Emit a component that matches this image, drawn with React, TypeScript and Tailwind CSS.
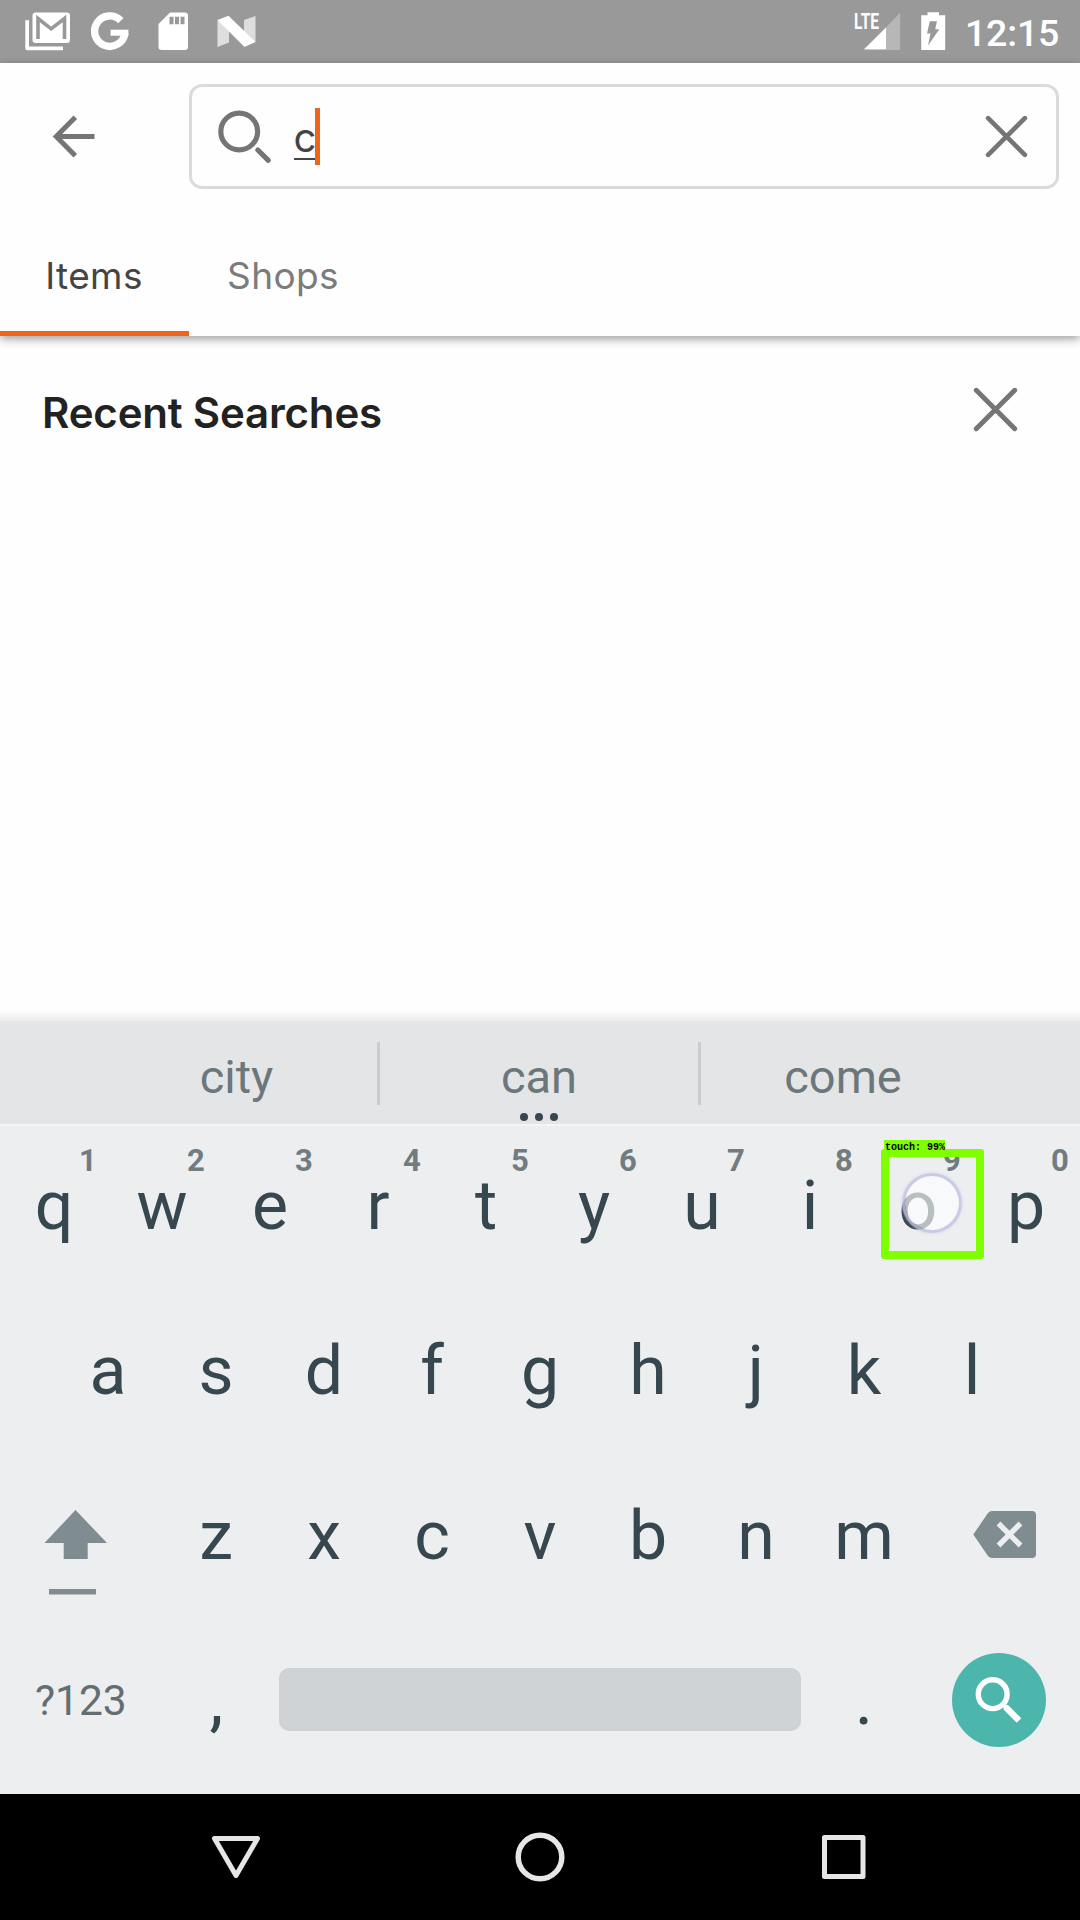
import type { ReactNode } from 'react';

const topRow = ['q', 'w', 'e', 'r', 't', 'y', 'u', 'i', 'o', 'p'];
const hints = ['1', '2', '3', '4', '5', '6', '7', '8', '9', '0'];
const homeRow = ['a', 's', 'd', 'f', 'g', 'h', 'j', 'k', 'l'];
const bottomRow = ['z', 'x', 'c', 'v', 'b', 'n', 'm'];

function Key({ label, hint, children }: { label: string; hint?: string; children?: ReactNode }) {
  return (
    <div className="relative flex h-[165px] w-[108px] items-center justify-center pb-px text-[68px] leading-none text-[#37474f]">
      {label}
      {hint && (
        <span className="absolute top-[20px] left-[68px] w-[40px] text-center text-[31px] leading-[34px] font-bold text-[#717c80]">
          {hint}
        </span>
      )}
      {children}
    </div>
  );
}

function CloseIcon({ size }: { size: number }) {
  return (
    <svg width={size} height={size} viewBox="0 0 44 44" fill="none" stroke="#757575" strokeWidth="4.8" strokeLinecap="round">
      <path d="M3.2 3.2 40.8 40.8M40.8 3.2 3.2 40.8" />
    </svg>
  );
}

function StatusBar() {
  return (
    <div className="flex h-[63px] justify-between bg-[#999999] text-white">
      <div className="flex pt-[12px] pl-[25px]">
        <svg className="mr-[20px]" width="46" height="39" viewBox="0 0 46 39" fill="none">
          <path d="M0.3 8.3H4V34.6H38V38.3H2.5Q.3 38.3 .3 36Z" fill="#fff" />
          <rect x="7.5" y=".4" width="37.5" height="30.6" rx="3.2" fill="#fff" />
          <path d="M13 27V6.5L26.2 16.8 39.5 6.5V27" stroke="#999" strokeWidth="3.6" />
        </svg>
        <svg className="mr-[29px]" width="38" height="39" viewBox="0 0 38 39" fill="none" stroke="#fff" strokeWidth="7.4">
          <path d="M29.8 8.6A15.2 15.2 0 1 0 33.9 21.2" />
          <path d="M19.600 20.700H37.400" strokeWidth="6" />
        </svg>
        <svg className="mr-[28px]" width="31" height="39" viewBox="0 0 31 39">
          <path d="M12 .6H26.7Q30 .6 30 3.8V34.8Q30 38 26.7 38H3.8Q.5 38 .5 34.8V12Z" fill="#fff" />
          <path d="M11.5 4.8h4v7.4h-4zM17 4.8h4v7.4h-4zM22.5 4.8h4v7.4h-4z" fill="#999" />
        </svg>
        <svg width="39" height="39" viewBox="0 0 39 39">
          <path d="M.5 8 12 14V30.500L.5 35ZM38.500 4 27 8V24L38.500 30Z" fill="#fff" fillOpacity=".68" />
          <path d="M.5 8 11.500 3.800 38.500 30 27.500 35Z" fill="#fff" />
        </svg>
      </div>
      <div className="flex pt-[4px] pr-[22px]">
        <svg className="mr-[20px]" width="50" height="47" viewBox="-2 -8 50 47" fill="#fff">
          <path d="M47.200 .8V38H11Z" fillOpacity=".3" />
          <path d="M33 15.400V37.300H11Z" />
          <text x="1" y="17" fontFamily="Roboto" fontWeight="700" fontSize="22" textLength="25" lengthAdjust="spacingAndGlyphs" stroke="none">
            LTE
          </text>
        </svg>
        <svg className="mt-[8px] mr-[19px]" width="25" height="39" viewBox="0 0 25 39">
          <path d="M6.5 .3H18V3.2H24.2V38H.2V3.2H6.5Z" fill="#fff" />
          <path d="M8.8 9.3H16L14.2 17.3H18.3L7 33.5 9.5 21.6H6Z" fill="#999" />
        </svg>
        <span className="mt-[7px] w-[93px] text-right text-[37.500px] leading-[44px] font-medium tracking-[-0.2px]">12:15</span>
      </div>
    </div>
  );
}

function SearchHeader() {
  return (
    <header className="relative z-10 h-[273px] bg-[#fefefe] shadow-[0_3px_9px_rgba(0,0,0,0.38)]">
      <div className="flex pt-[21px]">
        <div className="flex h-[105px] w-[189px] items-center pl-[52px]">
          <svg width="43" height="43" viewBox="0 0 43 43" fill="none" stroke="#757575" strokeWidth="5">
            <path d="M23.300 2.200 4.200 21.500 23.300 40.800M4.200 21.500H42.500" />
          </svg>
        </div>
        <div className="flex h-[105px] w-[870px] items-center rounded-[13px] border-3 border-[#dbdbdb] pr-[28px] pl-[26px]">
          <svg width="54" height="54" viewBox="0 0 54 54" fill="none" stroke="#757575">
            <circle cx="21.2" cy="21.5" r="18.4" strokeWidth="5.2" />
            <path d="M39.8 40 50.3 50.3" strokeWidth="5.2" strokeLinecap="round" />
          </svg>
          <div className="ml-[22px] flex h-[73px] w-[21px] justify-center self-start border-b-2 border-[#444444] pt-[29px] pl-px font-[Inter] text-[40px] leading-[43px] text-[#444444]">
            c
          </div>
          <div className="h-[57px] w-[5px] bg-[#f1641e]" />
          <div className="ml-auto flex">
            <CloseIcon size={43} />
          </div>
        </div>
      </div>
      <div className="flex h-[147px] font-[Inter] text-[37px] leading-[44px] tracking-[0.4px]">
        <div className="flex w-[189px] justify-center border-b-5 border-[#f1641e] pt-[65px] pr-px text-[#444444]">Items</div>
        <div className="w-[188px] pt-[65px] text-center text-[#7b7b7b]">Shops</div>
      </div>
    </header>
  );
}

function Suggestions() {
  return (
    <div className="flex h-[103px] items-center bg-[#e3e5e6] text-[47px] leading-[56px] text-[#6b777b]">
      <div className="w-[377px] pt-[8px] pl-[96px] text-center">city</div>
      <div className="mt-[2px] h-[63px] w-[3px] bg-[#cacdcf]" />
      <div className="relative w-[318px] pt-[8px] text-center">
        can
        <div className="absolute top-[72px] left-[140px] flex gap-[7px]">
          <i className="size-[8px] rounded-full bg-[#37474f]" />
          <i className="size-[8px] rounded-full bg-[#37474f]" />
          <i className="size-[8px] rounded-full bg-[#37474f]" />
        </div>
      </div>
      <div className="mt-[2px] h-[63px] w-[3px] bg-[#cacdcf]" />
      <div className="w-[284px] pt-[8px] text-center">come</div>
    </div>
  );
}

function TouchMarker() {
  return (
    <>
      <div className="absolute top-[49px] left-[38px] size-[60px] rounded-full border-3 border-[#c0c2e4]/80 bg-white/65 bg-clip-padding shadow-[0_0_3px_rgba(190,192,230,0.5)]" />
      <div className="absolute top-[25px] left-[17px] h-[110px] w-[103px] rounded-[3px] border-8 border-[#80ff00]" />
      <div className="absolute top-[16px] left-[20px] h-[12px] w-[61px] bg-[#80ff00] pl-[1px] font-['Liberation_Mono'] text-[10px] leading-[15px] font-bold whitespace-nowrap text-black">
        touch: 99%
      </div>
    </>
  );
}

function Keyboard() {
  return (
    <div className="h-[670px] bg-[#eceeef] shadow-[inset_0_2px_0_#f4f5f6]">
      <div className="flex">
        {topRow.map((k, i) => (
          <Key key={k} label={k} hint={hints[i]}>
            {k === 'o' && <TouchMarker />}
          </Key>
        ))}
      </div>
      <div className="flex justify-center">
        {homeRow.map((k) => (
          <Key key={k} label={k} />
        ))}
      </div>
      <div className="flex">
        <div className="w-[162px] pt-[56px] pl-[44px]">
          <svg width="64" height="86" viewBox="0 0 64 86" fill="#7f8c90">
            <path d="M31.5 0 63 33H43.7V49H19.7V33H.5Z" />
            <path d="M5 79H52V84.5H5Z" />
          </svg>
        </div>
        {bottomRow.map((k) => (
          <Key key={k} label={k} />
        ))}
        <div className="w-[162px] pt-[57px] pl-[55px]">
          <svg width="64" height="48" viewBox="0 0 64 48">
            <path d="M.3 23.5 15 2Q16.500 0 19 0H59Q63 0 63 4V43Q63 47 59 47H19Q16.500 47 15 45Z" fill="#7f8c90" />
            <path d="M25.500 12.500 47.500 34.500M47.500 12.500 25.500 34.500" stroke="#eceeef" strokeWidth="5.400" />
          </svg>
        </div>
      </div>
      <div className="flex h-[165px] items-center">
        <div className="-mt-px w-[162px] pl-[35px] text-[42.500px] leading-[50px] text-[#636e72]">?123</div>
        <div className="-mt-[4px] w-[108px] pl-px text-center text-[70px] leading-[80px] text-[#37474f]">,</div>
        <div className="mx-[9px] mt-[-5px] h-[63px] w-[522px] rounded-[10px] bg-[#cfd3d6]" />
        <div className="-mt-[4px] w-[108px] text-center text-[70px] leading-[80px] text-[#37474f]">.</div>
        <div className="mt-[-3px] ml-[34px] flex size-[94px] rounded-full bg-[#4db6ac]">
          <svg width="94" height="94" viewBox="0 0 94 94" fill="none" stroke="#fff">
            <circle cx="40.700" cy="41.200" r="14.400" strokeWidth="5.400" />
            <path d="M51 51.500 54.500 55" strokeWidth="4" />
            <path d="M53.500 54 67 67.500" strokeWidth="6.400" />
          </svg>
        </div>
      </div>
    </div>
  );
}

function NavigationBar() {
  return (
    <div className="flex h-[126px] items-center justify-between bg-black px-[211px]">
      <svg width="50" height="52" viewBox="0 0 50 52" fill="none" stroke="#e6e6e6" strokeWidth="5" strokeLinejoin="round">
        <path d="M3.500 7.500H46.500L25 44.500Z" />
      </svg>
      <svg width="50" height="52" viewBox="0 0 50 52" fill="none" stroke="#e6e6e6" strokeWidth="5.500">
        <circle cx="25" cy="26" r="21.800" />
      </svg>
      <svg width="50" height="52" viewBox="0 0 50 52" fill="none" stroke="#e6e6e6" strokeWidth="5" strokeLinejoin="round">
        <path d="M5.500 6.500H44V45.500H5.500Z" />
      </svg>
    </div>
  );
}

export default function App() {
  return (
    <div className="flex h-[1920px] w-[1080px] flex-col overflow-hidden bg-[#fefefe] font-[Roboto,sans-serif]">
      <StatusBar />
      <SearchHeader />
      <main className="flex flex-1 flex-col justify-between">
        <div className="flex items-start justify-between pt-[49px] pr-[62px] pl-[42px]">
          <h1 className="pt-[2px] font-[Inter] text-[42px] leading-[52px] font-semibold tracking-[-0.18px] text-[#222222]">Recent Searches</h1>
          <div className="pt-[2px]">
            <CloseIcon size={45} />
          </div>
        </div>
        <div className="h-[10px] bg-gradient-to-b from-[#fefefe] to-[#ebebeb]" />
      </main>
      <Suggestions />
      <Keyboard />
      <NavigationBar />
    </div>
  );
}
